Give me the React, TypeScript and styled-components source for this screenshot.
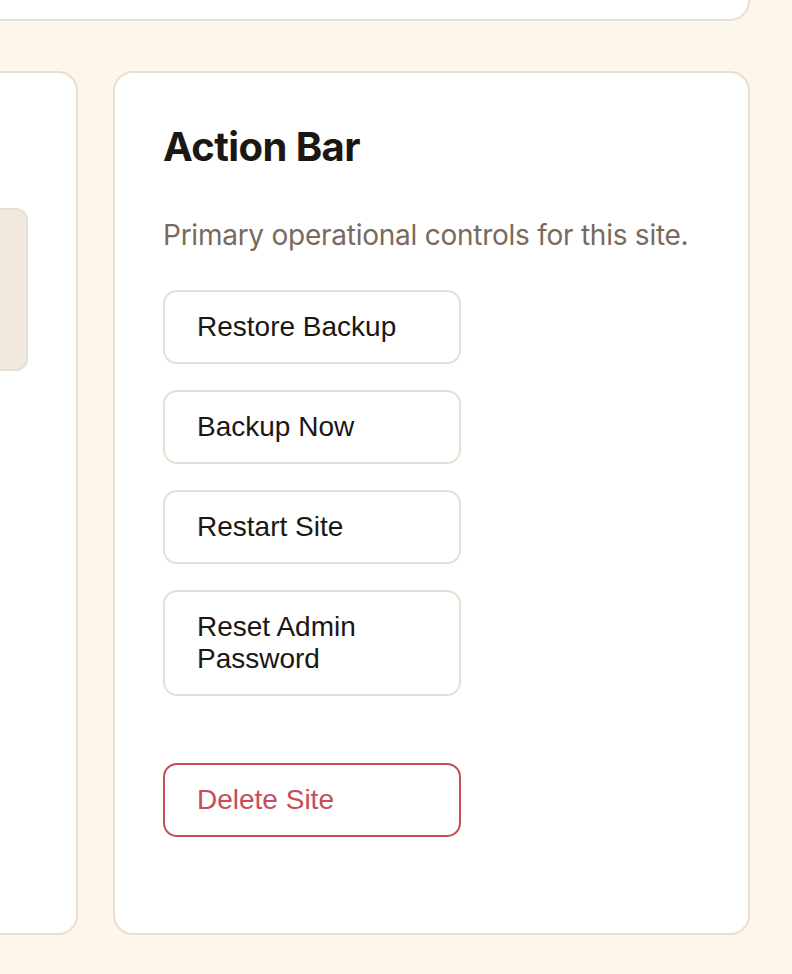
import React from "react";
import styled, { createGlobalStyle } from "styled-components";

const GlobalStyle = createGlobalStyle`
  html, body {
    margin: 0;
    padding: 0;
    background: #fdf6eb;
    overflow: hidden;
  }
  * { box-sizing: border-box; }
`;

const Page = styled.div`
  width: 792px;
  height: 974px;
  padding-right: 42px;
  background: #fdf6eb;
  overflow: hidden;
`;

const TopCard = styled.div`
  height: 21px;
  margin-left: -200px;
  background: #ffffff;
  border: 2px solid #e6dfd3;
  border-top: none;
  border-radius: 0 0 20px 20px;
`;

const Row = styled.div`
  display: grid;
  grid-template-columns: minmax(0, 1fr) 637px;
  gap: 35px;
  margin-top: 50px;
  margin-left: -200px;
  height: 864px;
`;

const Card = styled.section`
  background: #ffffff;
  border: 2px solid #e6dfd3;
  border-radius: 20px;
  padding: 49px 48px;
  display: flex;
  flex-direction: column;
`;

const SideCard = styled(Card)`
  align-items: flex-end;
  padding-top: 135px;
`;

const InsetPanel = styled.div`
  width: 160px;
  height: 163px;
  background: #f1e9e0;
  border: 2px solid #e6dfd3;
  border-radius: 12px;
`;

const Title = styled.h2`
  margin: 1px 0 0 0;
  font-family: "Inter", "DejaVu Sans", sans-serif;
  font-weight: 700;
  font-size: 40px;
  line-height: 48px;
  letter-spacing: -0.6px;
  color: #1b1714;
`;

const Description = styled.p`
  margin: 47px 0 0 0;
  font-family: "Inter", "DejaVu Sans", sans-serif;
  font-weight: 400;
  font-size: 28px;
  line-height: 34px;
  letter-spacing: -0.25px;
  color: #7a6a5d;
`;

const Actions = styled.div`
  display: flex;
  flex-direction: column;
  align-items: flex-start;
  gap: 26px;
  margin-top: 38px;
`;

const ActionButton = styled.button<{ $danger?: boolean }>`
  width: 298px;
  padding: 19px 32px;
  margin-top: ${(p) => (p.$danger ? "41px" : "0")};
  text-align: left;
  background: #ffffff;
  border: 2px solid ${(p) => (p.$danger ? "#c74d58" : "#e6dfd3")};
  border-radius: 14px;
  font-family: "Liberation Sans", Arial, sans-serif;
  font-size: 28px;
  line-height: 32px;
  color: ${(p) => (p.$danger ? "#c74d58" : "#1b1714")};
  cursor: pointer;
`;

const actions = ["Restore Backup", "Backup Now", "Restart Site", "Reset Admin Password"];

export default function App() {
  return (
    <>
      <GlobalStyle />
      <Page>
        <TopCard />
        <Row>
          <SideCard>
            <InsetPanel />
          </SideCard>
          <Card>
            <Title>Action Bar</Title>
            <Description>Primary operational controls for this site.</Description>
            <Actions>
              {actions.map((a) => (
                <ActionButton key={a}>{a}</ActionButton>
              ))}
              <ActionButton $danger>Delete Site</ActionButton>
            </Actions>
          </Card>
        </Row>
      </Page>
    </>
  );
}
